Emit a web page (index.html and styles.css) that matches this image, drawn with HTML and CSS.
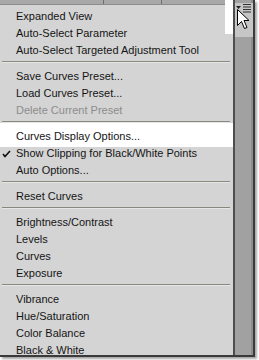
FILE: index.html
```html
<html lang="en">
  <head>
    <meta charset="UTF-8" />
    <title>Curves panel menu</title>
    <link rel="stylesheet" href="styles.css">
  </head>
  <body>
    <div class="screen">
      <div class="menu-col">
        <div class="tabs">
          <span class="tab tab-a"></span>
          <span class="tab tab-b"></span>
          <span class="tab tab-c"></span>
        </div>
        <ul class="menu">
          <li class="item">Expanded View</li>
          <li class="item">Auto-Select Parameter</li>
          <li class="item">Auto-Select Targeted Adjustment Tool</li>
          <li class="sep"></li>
          <li class="item">Save Curves Preset...</li>
          <li class="item">Load Curves Preset...</li>
          <li class="item disabled">Delete Current Preset</li>
          <li class="sep"></li>
          <li class="item lit">Curves Display Options...</li>
          <li class="item checked">
            <svg class="check" width="9" height="8" viewBox="0 0 9 8">
              <polyline points="1,4 3,6.5 8,1" fill="none" stroke="#111" stroke-width="1.6" />
            </svg>
            Show Clipping for Black/White Points
          </li>
          <li class="item">Auto Options...</li>
          <li class="sep"></li>
          <li class="item">Reset Curves</li>
          <li class="sep"></li>
          <li class="item">Brightness/Contrast</li>
          <li class="item">Levels</li>
          <li class="item">Curves</li>
          <li class="item">Exposure</li>
          <li class="sep"></li>
          <li class="item">Vibrance</li>
          <li class="item">Hue/Saturation</li>
          <li class="item">Color Balance</li>
          <li class="item">Black &amp; White</li>
        </ul>
      </div>
      <div class="panel">
        <div class="panel-top">
          <svg class="flyout" width="16" height="10" viewBox="0 0 16 10">
            <polygon points="0,3 5,3 2.5,6" fill="#222" />
            <rect x="7" y="1" width="8" height="1" fill="#333" />
            <rect x="7" y="3.5" width="8" height="1" fill="#333" />
            <rect x="7" y="6" width="8" height="1" fill="#333" />
            <rect x="7" y="8.5" width="8" height="1" fill="#333" />
          </svg>
        </div>
      </div>
      <div class="spot"></div>
      <svg class="cursor" width="13" height="22" viewBox="0 0 13 22">
        <polygon points="0.5,0.5 0.5,16.5 4.5,12.5 7.5,19.5 10,18.5 7,11.5 12,11.5" fill="#fff" stroke="#000" stroke-width="1" />
      </svg>
    </div>
  </body>
</html>
```
FILE: styles.css
```css
body {
  margin: 0;
  background: #ffffff;
}
.screen {
  position: relative;
  display: flex;
  width: 253px;
  height: 355px;
  border-right: 2px solid #3a3a3a;
  border-bottom: 2px solid #3a3a3a;
  box-shadow: 2px 2px 2px rgba(0, 0, 0, 0.35);
  overflow: hidden;
}
.menu-col {
  width: 233px;
  background: #d4d4d4;
}
.tabs {
  display: flex;
  height: 4px;
  background: #a8a8a8;
  border-bottom: 1px solid #8c8c8c;
}
.tab {
  height: 4px;
  border-right: 1px solid #707070;
}
.tab-a {
  width: 103px;
}
.tab-b {
  width: 57px;
}
.tab-c {
  flex: 1;
  border-right: none;
}
.menu {
  list-style: none;
  margin: 0;
  padding: 3px 0 0;
  font-family: "Liberation Sans", Arial, sans-serif;
  font-size: 11px;
  color: #141414;
}
.item {
  position: relative;
  height: 17px;
  line-height: 17px;
  padding-left: 16px;
  white-space: nowrap;
}
.disabled {
  color: #8c8c8c;
}
.lit {
  background: #ffffff;
  box-shadow: 0 -5px 0 #ffffff, 0 2px 0 #ffffff;
}
.check {
  position: absolute;
  left: 2px;
  top: 5px;
}
.sep {
  height: 9px;
  margin: 0 3px 0 2px;
  background: linear-gradient(#d4d4d4 2px, #89887c 2px, #89887c 3px, #e6e6e6 3px, #e6e6e6 4px, #d4d4d4 4px);
}
.panel {
  width: 18px;
  border-left: 2px solid #4e4e4e;
  background: #a1a1a1;
  box-shadow: inset -2px 0 0 #8e8e8e;
}
.panel-top {
  height: 34px;
  background: #c6c6c6;
}
.flyout {
  display: block;
  margin: 3px 0 0 1px;
}
.spot {
  position: absolute;
  left: 225px;
  top: 0;
  width: 8px;
  height: 34px;
  background: #ffffff;
}
.cursor {
  position: absolute;
  left: 237px;
  top: 9px;
}
```
